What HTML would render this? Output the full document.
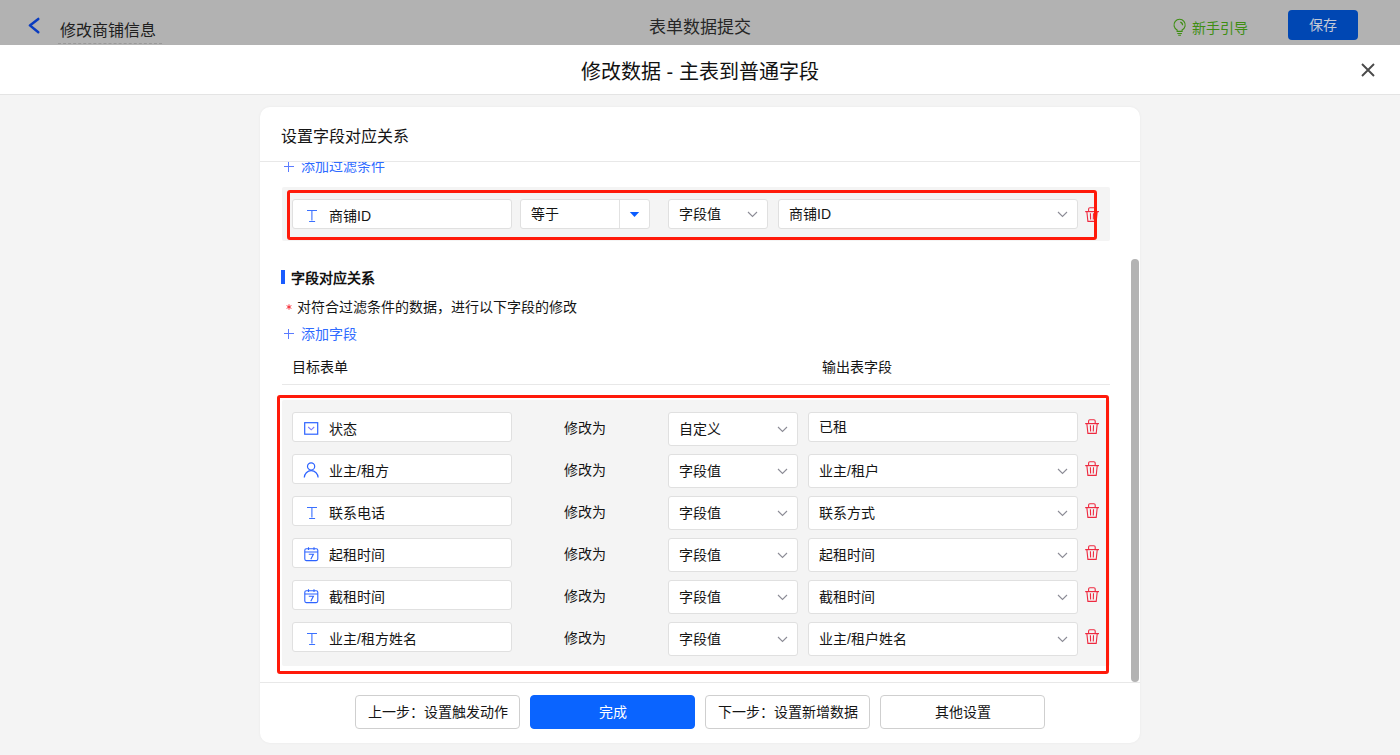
<!DOCTYPE html>
<html lang="zh-CN">
<head>
<meta charset="utf-8">
<style>
*{box-sizing:border-box;margin:0;padding:0}
html,body{width:1400px;height:755px;overflow:hidden;background:#f4f4f4;font-family:"Liberation Sans",sans-serif;color:#151515}
.a{position:absolute}
.t{position:absolute;white-space:nowrap;line-height:1}
#topbar{left:0;top:0;width:1400px;height:45px;background:#b2b2b2}
#mhead{left:0;top:45px;width:1400px;height:50px;background:#fff;border-bottom:1px solid #e4e4e4}
#card{left:260px;top:107px;width:880px;height:636px;background:#fff;border-radius:10px;box-shadow:0 0 3px rgba(0,0,0,0.05)}
.hline{position:absolute;height:1px;background:#e8e8e8}
.box{position:absolute;background:#fff;border:1px solid #e0e0e0;border-radius:3px}
.graybg{position:absolute;background:#f4f4f4;border-radius:2px}
.red{position:absolute;border:3px solid #ff1a0a;border-radius:3px}
.btn{position:absolute;top:695px;width:165px;height:34px;border:1px solid #cfcfcf;border-radius:4px;background:#fff;font-size:14px;text-align:center;line-height:32px}
</style>
</head>
<body>
<div id="topbar" class="a"></div>
<svg class="a" style="left:27px;top:16px" width="14" height="20" viewBox="0 0 14 20"><path d="M11.3 2.9 L2.9 9.4 L11.3 16.2" fill="none" stroke="#0a3cc0" stroke-width="2.5" stroke-linecap="round" stroke-linejoin="round"/></svg>
<div class="t" style="left:60px;top:22.5px;font-size:16px;color:#1e1e1e">修改商铺信息</div>
<div class="a" style="left:58px;top:43px;width:104px;border-top:1px dashed #999"></div>
<div class="t" style="left:649px;top:18.5px;font-size:17px;color:#262626">表单数据提交</div>
<svg class="a" style="left:1172px;top:17.5px" width="16" height="19" viewBox="0 0 16 19"><g fill="none" stroke="#3e8e12" stroke-width="1.1"><path d="M5.1 13.4 V11.9 A5.6 5.6 0 1 1 10.1 11.9 V13.4 Z"/><path d="M5.3 15.5 H9.9 M6.2 17.3 H9.0"/><path d="M8.3 4.1 A3.2 3.2 0 0 1 10.6 7.2"/></g></svg>
<div class="t" style="left:1191.5px;top:20.5px;font-size:14px;color:#3e8e12">新手引导</div>
<div class="a" style="left:1288px;top:10px;width:70px;height:30px;background:#0047b3;border-radius:4px"></div>
<div class="t" style="left:1309px;top:18px;font-size:14px;color:#c4cad6">保存</div>

<div id="mhead" class="a"></div>
<div class="t" style="left:581px;top:62px;font-size:20px;color:#111">修改数据 - 主表到普通字段</div>
<svg class="a" style="left:1360px;top:62px" width="16" height="16" viewBox="0 0 16 16"><path d="M2 2 L14 14 M14 2 L2 14" stroke="#4a4a4a" stroke-width="1.9"/></svg>

<div id="card" class="a"></div>
<div class="t" style="left:281px;top:129px;font-size:16px">设置字段对应关系</div>
<div class="hline" style="left:260px;top:161px;width:880px"></div>
<div class="a" style="left:260px;top:162px;width:880px;height:520px;overflow:hidden">
<div class="a" style="left:-260px;top:-162px;width:1400px;height:755px">
<svg class="a" style="left:284px;top:162px" width="10" height="10" viewBox="0 0 10 10"><path d="M4.5 0 V10 M0 4.5 H10" stroke="#5b7cff" stroke-width="1"/></svg>
<div class="t" style="left:301px;top:159px;font-size:14px;color:#2f6bff">添加过滤条件</div>
<div class="graybg" style="left:282px;top:187px;width:828px;height:54px"></div>
<div class="box" style="left:292px;top:199px;width:220px;height:30px"></div>
<svg class="a" style="left:306px;top:209px" width="12" height="14" viewBox="0 0 12 14"><path d="M1 1.5 H11 M5.9 2 V11.6 M3.1 12.5 H9.1" fill="none" stroke="#3a70ff" stroke-width="1.1"/></svg>
<div class="t" style="left:329px;top:209px;font-size:14px">商铺ID</div>
<div class="box" style="left:520px;top:199px;width:130px;height:30px"></div>
<div class="a" style="left:619px;top:200px;width:1px;height:28px;background:#e2e2e2"></div>
<div class="t" style="left:531px;top:207px;font-size:14px">等于</div>
<svg class="a" style="left:629px;top:211px" width="11" height="7" viewBox="0 0 11 7"><path d="M0.8 1 H10.2 L5.5 6 Z" fill="#0a5cff"/></svg>
<div class="box" style="left:668px;top:199px;width:100px;height:30px"></div>
<div class="t" style="left:679px;top:207px;font-size:14px">字段值</div>
<svg class="a" style="left:747px;top:211px" width="11" height="7" viewBox="0 0 11 7"><path d="M1 1 L5.5 5.5 L10 1" fill="none" stroke="#8c8c96" stroke-width="1.1"/></svg>
<div class="box" style="left:778px;top:199px;width:300px;height:30px"></div>
<div class="t" style="left:789px;top:207px;font-size:14px">商铺ID</div>
<svg class="a" style="left:1057px;top:211px" width="11" height="7" viewBox="0 0 11 7"><path d="M1 1 L5.5 5.5 L10 1" fill="none" stroke="#8c8c96" stroke-width="1.1"/></svg>
<svg class="a" style="left:1085px;top:207px" width="15" height="16" viewBox="0 0 15 16"><g fill="none" stroke="#ee2a40" stroke-width="1.1"><path d="M3.6 4.4 V2 Q3.6 0.7 4.9 0.7 H8.9 Q10.2 0.7 10.2 2 V4.4"/><path d="M0.2 4.6 H14" stroke-width="1.2"/><path d="M1.9 5 L2.9 14.4 H11.2 L12.2 5"/><path d="M5.4 6.2 L5.6 12.4 M8.5 6.2 L8.3 12.4"/></g></svg>
<div class="red" style="left:287px;top:190px;width:810px;height:50px"></div>
<div class="a" style="left:281px;top:270px;width:4px;height:14px;background:#1a5cff"></div>
<div class="t" style="left:291px;top:271px;font-size:14px;color:#111;font-weight:bold">字段对应关系</div>
<svg class="a" style="left:286px;top:304px" width="6" height="6" viewBox="0 0 6 6"><path d="M3 0.3 V5.7 M0.6 1.6 L5.4 4.4 M0.6 4.4 L5.4 1.6" stroke="#f5222d" stroke-width="0.9"/></svg>
<div class="t" style="left:297px;top:300px;font-size:14px">对符合过滤条件的数据，进行以下字段的修改</div>
<svg class="a" style="left:284px;top:329px" width="10" height="10" viewBox="0 0 10 10"><path d="M4.5 0 V10 M0 4.5 H10" stroke="#5b7cff" stroke-width="1"/></svg>
<div class="t" style="left:301px;top:327px;font-size:14px;color:#2f6bff">添加字段</div>
<div class="t" style="left:292px;top:360px;font-size:14px">目标表单</div>
<div class="t" style="left:822px;top:360px;font-size:14px">输出表字段</div>
<div class="hline" style="left:282px;top:384px;width:828px"></div>
<div class="graybg" style="left:282px;top:400px;width:828px;height:266px"></div>
<div class="box" style="left:292px;top:412px;width:220px;height:30px"></div>
<svg class="a" style="left:304px;top:422px" width="15" height="14" viewBox="0 0 15 14"><rect x="0.7" y="0.7" width="13" height="11.5" fill="none" stroke="#2d63ff" stroke-width="1.2"/><path d="M4.2 5 L7.2 7.8 L10.2 5" fill="none" stroke="#7c7cff" stroke-width="1.1"/></svg>
<div class="t" style="left:329px;top:422px;font-size:14px">状态</div>
<div class="t" style="left:564px;top:421px;font-size:14px">修改为</div>
<div class="box" style="left:668px;top:412px;width:130px;height:34px"></div>
<div class="t" style="left:679px;top:422px;font-size:14px">自定义</div>
<svg class="a" style="left:777px;top:426px" width="11" height="7" viewBox="0 0 11 7"><path d="M1 1 L5.5 5.5 L10 1" fill="none" stroke="#8c8c96" stroke-width="1.1"/></svg>
<div class="box" style="left:808px;top:412px;width:270px;height:30px"></div>
<div class="t" style="left:819px;top:420px;font-size:14px">已租</div>
<svg class="a" style="left:1085px;top:419px" width="15" height="16" viewBox="0 0 15 16"><g fill="none" stroke="#ee2a40" stroke-width="1.1"><path d="M3.6 4.4 V2 Q3.6 0.7 4.9 0.7 H8.9 Q10.2 0.7 10.2 2 V4.4"/><path d="M0.2 4.6 H14" stroke-width="1.2"/><path d="M1.9 5 L2.9 14.4 H11.2 L12.2 5"/><path d="M5.4 6.2 L5.6 12.4 M8.5 6.2 L8.3 12.4"/></g></svg>
<div class="box" style="left:292px;top:454px;width:220px;height:30px"></div>
<svg class="a" style="left:303px;top:462px" width="16" height="17" viewBox="0 0 16 17"><g fill="none" stroke="#2d63ff" stroke-width="1.2"><circle cx="8.1" cy="4.4" r="3.6"/><path d="M1.3 15.6 A6.9 6.9 0 0 1 15.1 15.6"/></g></svg>
<div class="t" style="left:329px;top:464px;font-size:14px">业主/租方</div>
<div class="t" style="left:564px;top:463px;font-size:14px">修改为</div>
<div class="box" style="left:668px;top:454px;width:130px;height:34px"></div>
<div class="t" style="left:679px;top:464px;font-size:14px">字段值</div>
<svg class="a" style="left:777px;top:468px" width="11" height="7" viewBox="0 0 11 7"><path d="M1 1 L5.5 5.5 L10 1" fill="none" stroke="#8c8c96" stroke-width="1.1"/></svg>
<div class="box" style="left:808px;top:454px;width:270px;height:34px"></div>
<div class="t" style="left:819px;top:464px;font-size:14px">业主/租户</div>
<svg class="a" style="left:1057px;top:468px" width="11" height="7" viewBox="0 0 11 7"><path d="M1 1 L5.5 5.5 L10 1" fill="none" stroke="#8c8c96" stroke-width="1.1"/></svg>
<svg class="a" style="left:1085px;top:461px" width="15" height="16" viewBox="0 0 15 16"><g fill="none" stroke="#ee2a40" stroke-width="1.1"><path d="M3.6 4.4 V2 Q3.6 0.7 4.9 0.7 H8.9 Q10.2 0.7 10.2 2 V4.4"/><path d="M0.2 4.6 H14" stroke-width="1.2"/><path d="M1.9 5 L2.9 14.4 H11.2 L12.2 5"/><path d="M5.4 6.2 L5.6 12.4 M8.5 6.2 L8.3 12.4"/></g></svg>
<div class="box" style="left:292px;top:496px;width:220px;height:30px"></div>
<svg class="a" style="left:306px;top:506px" width="12" height="14" viewBox="0 0 12 14"><path d="M1 1.5 H11 M5.9 2 V11.6 M3.1 12.5 H9.1" fill="none" stroke="#3a70ff" stroke-width="1.1"/></svg>
<div class="t" style="left:329px;top:506px;font-size:14px">联系电话</div>
<div class="t" style="left:564px;top:505px;font-size:14px">修改为</div>
<div class="box" style="left:668px;top:496px;width:130px;height:34px"></div>
<div class="t" style="left:679px;top:506px;font-size:14px">字段值</div>
<svg class="a" style="left:777px;top:510px" width="11" height="7" viewBox="0 0 11 7"><path d="M1 1 L5.5 5.5 L10 1" fill="none" stroke="#8c8c96" stroke-width="1.1"/></svg>
<div class="box" style="left:808px;top:496px;width:270px;height:34px"></div>
<div class="t" style="left:819px;top:506px;font-size:14px">联系方式</div>
<svg class="a" style="left:1057px;top:510px" width="11" height="7" viewBox="0 0 11 7"><path d="M1 1 L5.5 5.5 L10 1" fill="none" stroke="#8c8c96" stroke-width="1.1"/></svg>
<svg class="a" style="left:1085px;top:503px" width="15" height="16" viewBox="0 0 15 16"><g fill="none" stroke="#ee2a40" stroke-width="1.1"><path d="M3.6 4.4 V2 Q3.6 0.7 4.9 0.7 H8.9 Q10.2 0.7 10.2 2 V4.4"/><path d="M0.2 4.6 H14" stroke-width="1.2"/><path d="M1.9 5 L2.9 14.4 H11.2 L12.2 5"/><path d="M5.4 6.2 L5.6 12.4 M8.5 6.2 L8.3 12.4"/></g></svg>
<div class="box" style="left:292px;top:538px;width:220px;height:30px"></div>
<svg class="a" style="left:304px;top:547px" width="15" height="15" viewBox="0 0 15 15"><g fill="none" stroke="#2d63ff" stroke-width="1.1"><rect x="0.8" y="1.8" width="13" height="11.8" rx="1.5"/><path d="M0.8 5 H13.8 M4.5 0.3 V3 M10 0.3 V3"/><path d="M4.8 7.3 H9.4 L6.8 12.3"/></g></svg>
<div class="t" style="left:329px;top:548px;font-size:14px">起租时间</div>
<div class="t" style="left:564px;top:547px;font-size:14px">修改为</div>
<div class="box" style="left:668px;top:538px;width:130px;height:34px"></div>
<div class="t" style="left:679px;top:548px;font-size:14px">字段值</div>
<svg class="a" style="left:777px;top:552px" width="11" height="7" viewBox="0 0 11 7"><path d="M1 1 L5.5 5.5 L10 1" fill="none" stroke="#8c8c96" stroke-width="1.1"/></svg>
<div class="box" style="left:808px;top:538px;width:270px;height:34px"></div>
<div class="t" style="left:819px;top:548px;font-size:14px">起租时间</div>
<svg class="a" style="left:1057px;top:552px" width="11" height="7" viewBox="0 0 11 7"><path d="M1 1 L5.5 5.5 L10 1" fill="none" stroke="#8c8c96" stroke-width="1.1"/></svg>
<svg class="a" style="left:1085px;top:545px" width="15" height="16" viewBox="0 0 15 16"><g fill="none" stroke="#ee2a40" stroke-width="1.1"><path d="M3.6 4.4 V2 Q3.6 0.7 4.9 0.7 H8.9 Q10.2 0.7 10.2 2 V4.4"/><path d="M0.2 4.6 H14" stroke-width="1.2"/><path d="M1.9 5 L2.9 14.4 H11.2 L12.2 5"/><path d="M5.4 6.2 L5.6 12.4 M8.5 6.2 L8.3 12.4"/></g></svg>
<div class="box" style="left:292px;top:580px;width:220px;height:30px"></div>
<svg class="a" style="left:304px;top:589px" width="15" height="15" viewBox="0 0 15 15"><g fill="none" stroke="#2d63ff" stroke-width="1.1"><rect x="0.8" y="1.8" width="13" height="11.8" rx="1.5"/><path d="M0.8 5 H13.8 M4.5 0.3 V3 M10 0.3 V3"/><path d="M4.8 7.3 H9.4 L6.8 12.3"/></g></svg>
<div class="t" style="left:329px;top:590px;font-size:14px">截租时间</div>
<div class="t" style="left:564px;top:589px;font-size:14px">修改为</div>
<div class="box" style="left:668px;top:580px;width:130px;height:34px"></div>
<div class="t" style="left:679px;top:590px;font-size:14px">字段值</div>
<svg class="a" style="left:777px;top:594px" width="11" height="7" viewBox="0 0 11 7"><path d="M1 1 L5.5 5.5 L10 1" fill="none" stroke="#8c8c96" stroke-width="1.1"/></svg>
<div class="box" style="left:808px;top:580px;width:270px;height:34px"></div>
<div class="t" style="left:819px;top:590px;font-size:14px">截租时间</div>
<svg class="a" style="left:1057px;top:594px" width="11" height="7" viewBox="0 0 11 7"><path d="M1 1 L5.5 5.5 L10 1" fill="none" stroke="#8c8c96" stroke-width="1.1"/></svg>
<svg class="a" style="left:1085px;top:587px" width="15" height="16" viewBox="0 0 15 16"><g fill="none" stroke="#ee2a40" stroke-width="1.1"><path d="M3.6 4.4 V2 Q3.6 0.7 4.9 0.7 H8.9 Q10.2 0.7 10.2 2 V4.4"/><path d="M0.2 4.6 H14" stroke-width="1.2"/><path d="M1.9 5 L2.9 14.4 H11.2 L12.2 5"/><path d="M5.4 6.2 L5.6 12.4 M8.5 6.2 L8.3 12.4"/></g></svg>
<div class="box" style="left:292px;top:622px;width:220px;height:30px"></div>
<svg class="a" style="left:306px;top:632px" width="12" height="14" viewBox="0 0 12 14"><path d="M1 1.5 H11 M5.9 2 V11.6 M3.1 12.5 H9.1" fill="none" stroke="#3a70ff" stroke-width="1.1"/></svg>
<div class="t" style="left:329px;top:632px;font-size:14px">业主/租方姓名</div>
<div class="t" style="left:564px;top:631px;font-size:14px">修改为</div>
<div class="box" style="left:668px;top:622px;width:130px;height:34px"></div>
<div class="t" style="left:679px;top:632px;font-size:14px">字段值</div>
<svg class="a" style="left:777px;top:636px" width="11" height="7" viewBox="0 0 11 7"><path d="M1 1 L5.5 5.5 L10 1" fill="none" stroke="#8c8c96" stroke-width="1.1"/></svg>
<div class="box" style="left:808px;top:622px;width:270px;height:34px"></div>
<div class="t" style="left:819px;top:632px;font-size:14px">业主/租户姓名</div>
<svg class="a" style="left:1057px;top:636px" width="11" height="7" viewBox="0 0 11 7"><path d="M1 1 L5.5 5.5 L10 1" fill="none" stroke="#8c8c96" stroke-width="1.1"/></svg>
<svg class="a" style="left:1085px;top:629px" width="15" height="16" viewBox="0 0 15 16"><g fill="none" stroke="#ee2a40" stroke-width="1.1"><path d="M3.6 4.4 V2 Q3.6 0.7 4.9 0.7 H8.9 Q10.2 0.7 10.2 2 V4.4"/><path d="M0.2 4.6 H14" stroke-width="1.2"/><path d="M1.9 5 L2.9 14.4 H11.2 L12.2 5"/><path d="M5.4 6.2 L5.6 12.4 M8.5 6.2 L8.3 12.4"/></g></svg>
<div class="red" style="left:277px;top:395px;width:832px;height:279px"></div>
</div>
</div>
<div class="a" style="left:1131px;top:259px;width:8px;height:423px;background:#b3b3b3;border-radius:4px"></div>
<div class="hline" style="left:260px;top:682px;width:880px"></div>
<div class="btn" style="left:355px">上一步：设置触发动作</div>
<div class="btn" style="left:530px;background:#0a64ff;border-color:#0a64ff;color:#fff">完成</div>
<div class="btn" style="left:705px">下一步：设置新增数据</div>
<div class="btn" style="left:880px">其他设置</div>
</body>
</html>
